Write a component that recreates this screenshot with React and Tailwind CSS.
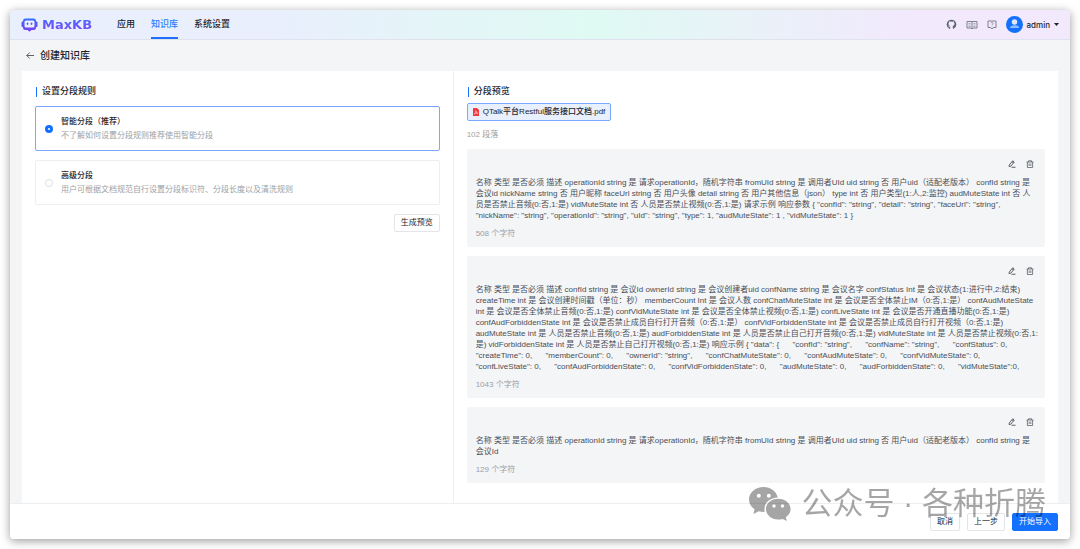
import { useState } from 'react'

const NAV_ITEMS = ['应用', '知识库', '系统设置']

const RULES = [
  { id: 'smart', title: '智能分段（推荐）', desc: '不了解如何设置分段规则推荐使用智能分段' },
  { id: 'advanced', title: '高级分段', desc: '用户可根据文档规范自行设置分段标识符、分段长度以及清洗规则' },
]

const PARAGRAPHS = [
  {
    count: 508,
    lines: [
      '名称 类型 是否必须 描述 operationId string 是 请求operationId，随机字符串 fromUId string 是 调用者UId uid string 否 用户uid（适配老版本） confId string 是',
      '会议id nickName string 否 用户昵称 faceUrl string 否 用户头像 detail string 否 用户其他信息（json） type int 否 用户类型(1:人,2:监控) audMuteState int 否 人',
      '员是否禁止音频(0:否,1:是) vidMuteState int 否 人员是否禁止视频(0:否,1:是) 请求示例 响应参数 { "confId": "string", "detail": "string", "faceUrl": "string",',
      '"nickName": "string", "operationId": "string", "uId": "string", "type": 1, "audMuteState": 1 , "vidMuteState": 1 }',
    ],
  },
  {
    count: 1043,
    lines: [
      '名称 类型 是否必须 描述 confId string 是 会议Id ownerId string 是 会议创建者uid confName string 是 会议名字 confStatus Int 是 会议状态(1:进行中,2:结束)',
      'createTime int 是 会议创建时间戳（单位：秒） memberCount Int 是 会议人数 confChatMuteState int 是 会议是否全体禁止IM（0:否,1:是） confAudMuteState',
      'int 是 会议是否全体禁止音频(0:否,1:是) confVidMuteState int 是 会议是否全体禁止视频(0:否,1:是) confLiveState int 是 会议是否开通直播功能(0:否,1:是)',
      'confAudForbiddenState int 是 会议是否禁止成员自行打开音频（0:否,1:是） confVidForbiddenState int 是 会议是否禁止成员自行打开视频（0:否,1:是)',
      'audMuteState int 是 人员是否禁止音频(0:否,1:是) audForbiddenState int 是 人员是否禁止自己打开音频(0:否,1:是) vidMuteState int 是 人员是否禁止视频(0:否,1:',
      '是) vidForbiddenState int 是 人员是否禁止自己打开视频(0:否,1:是) 响应示例 { "data": {      "confId": "string",      "confName": "string",      "confStatus": 0,',
      '"createTime": 0,      "memberCount": 0,      "ownerId": "string",      "confChatMuteState": 0,      "confAudMuteState": 0,      "confVidMuteState": 0,',
      '"confLiveState": 0,      "confAudForbiddenState": 0,      "confVidForbiddenState": 0,      "audMuteState": 0,      "audForbiddenState": 0,      "vidMuteState":0,',
    ],
  },
  {
    count: 129,
    lines: [
      '名称 类型 是否必须 描述 operationId string 是 请求operationId，随机字符串 fromUId string 是 调用者UId uid string 否 用户uid（适配老版本） confId string 是',
      '会议Id',
    ],
  },
]

function Logo() {
  return (
    <a href="#" className="flex items-center gap-1">
      <svg viewBox="0 0 34 28" className="w-[17px] h-[14px]" fill="none">
        <defs>
          <linearGradient id="logo" x1="0" y1="0" x2="0" y2="1">
            <stop offset="0" stopColor="#3370ff" />
            <stop offset="1" stopColor="#7f3bf5" />
          </linearGradient>
        </defs>
        <path
          fill="url(#logo)"
          fillRule="evenodd"
          d="M9 1h16a5 5 0 0 1 5 5v1h1a2 2 0 0 1 2 2v7a2 2 0 0 1-2 2h-1v1a5 5 0 0 1-5 5h-4l-3.5 3h-1L13 24H9a5 5 0 0 1-5-5v-1H3a2 2 0 0 1-2-2V9a2 2 0 0 1 2-2h1V6a5 5 0 0 1 5-5Zm1 4a3 3 0 0 0-3 3v8a3 3 0 0 0 3 3h14a3 3 0 0 0 3-3V8a3 3 0 0 0-3-3H10Z"
        />
        <rect x="11.5" y="9" width="3" height="5" rx="1.5" fill="#5a55fa" />
        <rect x="19.5" y="9" width="3" height="5" rx="1.5" fill="#5a55fa" />
      </svg>
      <span className="font-['DejaVu_Sans',sans-serif] text-[13px] leading-4 font-bold bg-linear-to-b from-[#3370ff] to-[#7f3bf5] bg-clip-text text-transparent">
        MaxKB
      </span>
    </a>
  )
}

function GithubIcon() {
  return (
    <svg viewBox="0 0 24 24" className="size-[11px]" fill="#5f6672">
      <path d="M12 1.5a10.5 10.5 0 0 0-4.6 19.9c.9.4 1.6.2 1.6-.5v-3.4c-2.3.4-3.2-.7-3.7-1.8-.3-.6-.6-.9-1.1-1.2.9-.5 1.9 0 2.5.9.7 1.1 1.5 1.2 2.4.9.1-.6.4-1 .7-1.3-2.7-.4-4.3-1.9-4.3-4.6 0-1.2.4-2.2 1.1-3-.2-.8-.2-1.8.2-2.7 1.1 0 2.1.5 2.9 1.1a9.5 9.5 0 0 1 4.6 0c.8-.6 1.8-1.1 2.9-1.1.4.9.4 1.9.2 2.7.7.8 1.1 1.8 1.1 3 0 2.7-1.6 4.2-4.3 4.6.5.5.8 1.2.8 2.2v3.7c0 .7.7.9 1.6.5A10.5 10.5 0 0 0 12 1.5Z" />
    </svg>
  )
}

function BookIcon() {
  return (
    <svg viewBox="0 0 24 20" className="w-3 h-[10px]" fill="none" stroke="#7c818c" strokeWidth="2">
      <path d="M12 3v15M12 3H2v13h8l2 2 2-2h8V3H12Z" />
      <path d="M5 7h4M5 10h4M5 13h4M15 7h4M15 10h4M15 13h4" strokeWidth="1.3" />
    </svg>
  )
}

function HelpIcon() {
  return (
    <svg viewBox="0 0 20 20" className="size-[10px]" fill="none" stroke="#7c818c" strokeWidth="2">
      <path d="M2 2h16v13h-5.5L10 18l-2.5-3H2Z" />
      <path d="M7.7 6.5c.2-2.2 4.6-2.2 4.6.2 0 1.5-2.3 1.5-2.3 3.2M10 11.5v1.5" strokeWidth="1.5" />
    </svg>
  )
}

function Header() {
  return (
    <header className="flex items-stretch h-[30px] px-[11px] border-b border-[#dfe3ee] bg-linear-to-r from-[#e9effd] from-25% via-[#dffaf3] via-55% to-[#f2e9fd] to-85%">
      <Logo />
      <nav className="flex gap-4 ml-[25px]">
        {NAV_ITEMS.map(item => (
          <a
            key={item}
            href="#"
            className={`flex items-center pt-[2px] border-b-2 text-[9px] font-medium ${
              item === '知识库' ? 'border-[#1f6fff] text-[#1f7cff]' : 'border-transparent text-[#1f2329]'
            }`}
          >
            {item}
          </a>
        ))}
      </nav>
      <div className="flex items-center gap-[9px] ml-auto">
        <a href="#" aria-label="GitHub"><GithubIcon /></a>
        <a href="#" aria-label="文档"><BookIcon /></a>
        <a href="#" aria-label="帮助"><HelpIcon /></a>
        <button className="flex items-center gap-1 font-['Inter',sans-serif] text-[8px] font-medium text-[#1f2329] cursor-pointer">
          <svg viewBox="0 0 34 34" className="size-[17px]">
            <circle cx="17" cy="17" r="17" fill="#1470ff" />
            <circle cx="17" cy="12" r="5.5" fill="#d9e8ff" />
            <path d="M8 24c0-4 4-5.5 9-5.5s9 1.5 9 5.5Z" fill="#8dbcff" />
          </svg>
          admin
          <svg viewBox="0 0 10 6" className="w-[5px] h-[3px]" fill="#1f2329"><path d="M0 0h10L5 6Z" /></svg>
        </button>
      </div>
    </header>
  )
}

function SectionTitle({ children }) {
  return (
    <h2 className="flex items-center gap-[5px] h-4 pl-px text-[9px] font-medium text-[#1f2329]">
      <span className="w-px h-[10px] bg-[#1470ff]" />
      {children}
    </h2>
  )
}

function RuleCard({ rule, checked, onChange }) {
  return (
    <label
      className={`flex items-center gap-2 h-[45px] px-[9px] border rounded-xs cursor-pointer ${
        checked ? 'border-[#7aa7ff]' : 'border-[#eceef1]'
      }`}
    >
      <input
        type="radio"
        name="rule"
        checked={checked}
        onChange={onChange}
        className="appearance-none size-2 shrink-0 rounded-full border border-[#dee0e3] bg-white checked:border-[3px] checked:border-[#1470ff]"
      />
      <span className="flex flex-col gap-[2px] pt-px">
        <span className="text-[8px] leading-3 font-medium text-[#1f2329]">{rule.title}</span>
        <span className="text-[8px] leading-3 text-[#9b9fa6]">{rule.desc}</span>
      </span>
    </label>
  )
}

function ParagraphCard({ paragraph }) {
  return (
    <article className="px-[9px] pt-[10px] pb-[7px] rounded-xs bg-[#f4f5f7]">
      <div className="flex justify-end gap-[10px] h-[18px] pt-px pr-[2px]">
        <button aria-label="编辑" className="size-2 cursor-pointer">
          <svg viewBox="0 0 16 16" className="size-2" fill="none" stroke="#4b5058" strokeWidth="1.8">
            <path d="M2.5 10 9.5 1.5l3 2.5-7 8.5-3.5.5ZM8 3.5l3 2.5M7 14.5h8" />
          </svg>
        </button>
        <button aria-label="删除" className="size-2 cursor-pointer">
          <svg viewBox="0 0 16 16" className="size-2" fill="none" stroke="#5c616a" strokeWidth="1.6">
            <path d="M1 4h14M5 4V1.5h6V4M2.8 4v11h10.4V4M6.3 7v5M9.7 7v5" />
          </svg>
        </button>
      </div>
      <p className="text-[8px] leading-[11px] text-[#4a4e55] whitespace-pre">
        {paragraph.lines.map((line, i) => (
          <span key={i} className="block">{line}</span>
        ))}
      </p>
      <p className="mt-[7px] text-[8px] leading-3 text-[#9b9fa6]">{paragraph.count} 个字符</p>
    </article>
  )
}

function Watermark() {
  return (
    <div className="absolute right-6 bottom-[15px] flex items-center gap-[10px] opacity-35 pointer-events-none">
      <svg viewBox="0 0 42 34" className="w-[42px] h-[34px]">
        <path
          fillRule="evenodd"
          d="M14.5 0C6.5 0 0 5.5 0 12.5c0 4 2.1 7.4 5.5 9.7L4.5 27l5.3-2.8c1.8.5 3.7.8 5.8.7A11 11 0 0 1 15.5 22c0-6.5 6-11.3 13.3-11.4C27.5 4.5 21.6 0 14.5 0ZM9.8 6.7a2 2 0 1 1 0 4 2 2 0 0 1 0-4Zm10 0a2 2 0 1 1 0 4 2 2 0 0 1 0-4Z"
        />
        <path
          fillRule="evenodd"
          d="M29.2 11.7c-6.9 0-12.3 4.6-12.3 10.4s5.4 10.5 12.3 10.5c1.6 0 3.1-.3 4.5-.7l4.2 2.1-1.1-3.7c2.9-1.9 4.8-4.8 4.8-8.2 0-5.8-5.5-10.4-12.4-10.4ZM25 17.3a1.7 1.7 0 1 1 0 3.4 1.7 1.7 0 0 1 0-3.4Zm8.5 0a1.7 1.7 0 1 1 0 3.4 1.7 1.7 0 0 1 0-3.4Z"
        />
      </svg>
      <span className="text-[31px] leading-10 whitespace-nowrap text-black">公众号 · 各种折腾</span>
    </div>
  )
}

function App() {
  const [rule, setRule] = useState('smart')

  return (
    <div className="min-h-screen flex flex-col p-[10px] bg-white font-['Liberation_Sans','Noto_Sans_CJK_SC',sans-serif]">
      <div className="relative flex flex-col flex-1 rounded-sm overflow-hidden bg-[#f4f5f7] shadow-[0_2px_10px_rgba(0,0,0,0.4)]">
        <Header />

        <div className="flex items-center gap-[6px] h-[31px] px-4">
          <button aria-label="返回" className="cursor-pointer">
            <svg viewBox="0 0 16 14" className="w-2 h-[7px]" fill="none" stroke="#4b5058" strokeWidth="1.8">
              <path d="M16 7H1.5M7.5 1l-6 6 6 6" />
            </svg>
          </button>
          <h1 className="text-[10px] font-medium text-[#1f2329]">创建知识库</h1>
        </div>

        <main className="flex flex-1 mx-3 bg-white">
          <section className="w-5/12 px-[13px] pt-[13px] border-r border-[#eceef1]">
            <SectionTitle>设置分段规则</SectionTitle>
            <div className="flex flex-col gap-[9px] mt-[6px]">
              {RULES.map(r => (
                <RuleCard key={r.id} rule={r} checked={rule === r.id} onChange={() => setRule(r.id)} />
              ))}
            </div>
            <div className="flex justify-end mt-[9px]">
              <button className="h-[18px] px-[6px] border border-[#e3e5e8] rounded-xs text-[8px] text-[#1f2329] cursor-pointer">
                生成预览
              </button>
            </div>
          </section>

          <section className="w-7/12 px-[13px] pt-[13px] pb-[19px]">
            <SectionTitle>分段预览</SectionTitle>
            <div className="flex mt-[3px]">
              <button className="flex items-center gap-1 h-[18px] px-[5px] border border-[#7aa7ff] rounded-xs bg-[#e8effd] text-[8px] font-medium text-[#1f2329] cursor-pointer">
                <svg viewBox="0 0 12 16" className="w-[6px] h-2">
                  <path d="M1 0h7l4 4v11a1 1 0 0 1-1 1H1a1 1 0 0 1-1-1V1a1 1 0 0 1 1-1Z" fill="#f5383b" />
                  <path d="M2.5 12c2-1 3.5-3.5 3.3-6.5C6 8.5 7.5 10.5 10 10.5 7 10 5 10.5 2.5 12Z" fill="none" stroke="#fff" />
                </svg>
                QTalk平台Restful服务接口文档.pdf
              </button>
            </div>
            <p className="mt-2 text-[8px] leading-3 text-[#9b9fa6]">102 段落</p>
            <div className="flex flex-col gap-[9px] mt-2">
              {PARAGRAPHS.map((p, i) => (
                <ParagraphCard key={i} paragraph={p} />
              ))}
            </div>
          </section>
        </main>

        <footer className="flex items-center justify-end gap-[7px] h-9 px-3 border-t border-[#eceef1] bg-white">
          <button className="h-[18px] px-[6px] border border-[#e3e5e8] rounded-xs text-[8px] text-[#1f2329] cursor-pointer">取消</button>
          <button className="h-[18px] px-[6px] border border-[#e3e5e8] rounded-xs text-[8px] text-[#1f2329] cursor-pointer">上一步</button>
          <button className="h-[18px] px-[6px] border border-[#1470ff] rounded-xs bg-[#1470ff] text-[8px] text-white cursor-pointer">开始导入</button>
        </footer>

        <Watermark />
      </div>
    </div>
  )
}

export default App
